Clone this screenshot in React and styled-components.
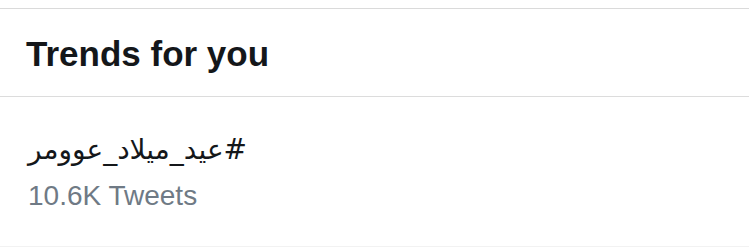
import styled, { createGlobalStyle } from "styled-components";

const GlobalStyle = createGlobalStyle`
  body {
    margin: 0;
    background: #ffffff;
    font-family: "Liberation Sans", Arial, sans-serif;
  }
`;

const Panel = styled.div`
  margin-top: 8px;
  border-top: 1px solid #dadada;
  background: #fff;
`;

const Header = styled.div`
  height: 87px;
  display: flex;
  align-items: center;
  padding-left: 26px;
  border-bottom: 1px solid #dcdcdc;
`;

const Title = styled.h2`
  margin: 0;
  padding-top: 2px;
  font-size: 35px;
  font-weight: 700;
  color: #14171a;
`;

const TrendItem = styled.div`
  height: 150px;
  box-sizing: border-box;
  padding: 33px 0 0 28px;
  border-bottom: 1px solid #f2f2f2;
`;

const Hashtag = styled.div`
  display: inline-block;
  direction: rtl;
  font-family: "DejaVu Sans", "Noto Sans", sans-serif;
  font-size: 28px;
  line-height: 40px;
  color: #14171a;
`;

const Count = styled.div`
  margin-top: 10px;
  font-size: 28px;
  line-height: 32px;
  color: #6f7a85;
`;

const App = () => {
  return (
    <>
      <GlobalStyle />
      <Panel>
        <Header>
          <Title>Trends for you</Title>
        </Header>
        <TrendItem>
          <Hashtag dir="rtl">#عيد_ميلاد_عوومر</Hashtag>
          <Count>10.6K Tweets</Count>
        </TrendItem>
      </Panel>
    </>
  );
};

export default App;
